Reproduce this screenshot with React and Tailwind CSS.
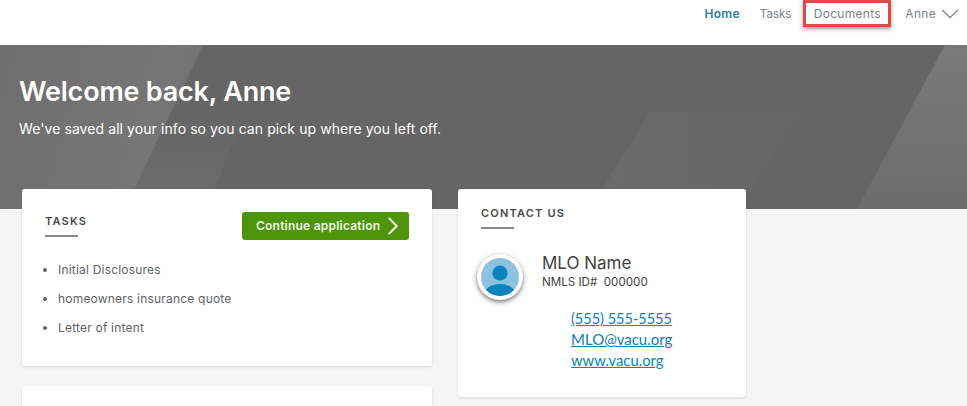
import React from 'react';
import { ChevronRight, ChevronDown } from 'lucide-react';

const tasks = ['Initial Disclosures', 'homeowners insurance quote', 'Letter of intent'];

function HeroShapes() {
  return (
    <svg className="absolute inset-0 h-full w-full" viewBox="0 0 967 164" preserveAspectRatio="none" aria-hidden="true">
      <defs>
        <linearGradient id="leftFade" x1="0" y1="0" x2="1" y2="0.2">
          <stop offset="0" stopColor="#6e6e6e" />
          <stop offset="0.85" stopColor="#767676" />
          <stop offset="1" stopColor="#727272" />
        </linearGradient>
        <linearGradient id="lowFade" x1="0" y1="0" x2="0" y2="1">
          <stop offset="0" stopColor="#666666" />
          <stop offset="1" stopColor="#6d6d6d" />
        </linearGradient>
        <linearGradient id="midFade" x1="0" y1="0" x2="1" y2="0">
          <stop offset="0" stopColor="#6b6b6b" />
          <stop offset="1" stopColor="#666666" />
        </linearGradient>
        <linearGradient id="rightFade" x1="0" y1="0" x2="0" y2="1">
          <stop offset="0" stopColor="#7a7a7a" />
          <stop offset="1" stopColor="#6c6c6c" />
        </linearGradient>
      </defs>
      <polygon points="0,0 203,0 125,164 0,164" fill="url(#leftFade)" />
      <polygon points="125,164 165,80 245,70 205,164" fill="url(#lowFade)" />
      <polygon points="650,67 800,67 740,164 590,164" fill="url(#midFade)" />
      <polygon points="945,0 967,0 967,164 857,164" fill="url(#rightFade)" />
    </svg>
  );
}

function SectionTitle({ children }) {
  return (
    <div>
      <h2 className="text-[11px] leading-[14px] font-semibold tracking-[1.2px] text-[#4a4a4a]">{children}</h2>
      <div className="mt-[7px] h-[2px] w-[33px] bg-[#8a8a8a]" />
    </div>
  );
}

function Avatar() {
  return (
    <div className="flex h-[46px] w-[46px] shrink-0 items-center justify-center rounded-full bg-white shadow-[0_2px_5px_rgba(0,0,0,0.55)]">
      <svg width="38" height="38" viewBox="0 0 38 38" aria-hidden="true">
        <defs>
          <clipPath id="avatarClip">
            <circle cx="19" cy="19" r="19" />
          </clipPath>
        </defs>
        <g clipPath="url(#avatarClip)">
          <rect width="38" height="38" fill="#8cc2e0" />
          <circle cx="19" cy="15" r="7.6" fill="#0a84ba" />
          <ellipse cx="19" cy="37" rx="16" ry="11" fill="#0a84ba" />
        </g>
      </svg>
    </div>
  );
}

export default function App() {
  return (
    <div className="h-[406px] w-[967px] overflow-hidden bg-[#f5f5f5] font-['Inter',sans-serif]">
      <nav className="flex h-[45px] items-start justify-end bg-white pr-[4px] text-[12px] leading-[18px] tracking-[0.3px]">
        <a className="mt-[5px] font-semibold text-[#2b7c9e]">Home</a>
        <a className="mt-[5px] ml-[20px] text-[11.5px] leading-[18px] tracking-[0px] text-[#7b8186]">Tasks</a>
        <a className="ml-[12px] flex h-[27px] w-[88px] items-center justify-center border-[3px] border-[#e2474b] text-[#7b8186] shadow-[0_2px_4px_rgba(0,0,0,0.4)]">
          Documents
        </a>
        <a className="mt-[5px] ml-[14px] flex items-center text-[#7b8186]">
          Anne
          <ChevronDown className="-my-[6px] -mr-[2px] -ml-[1px] h-[30px] w-[30px]" strokeWidth={0.9} />
        </a>
      </nav>

      <header className="relative h-[164px] bg-[#656565] pt-[28px] pl-[19px] text-white">
        <HeroShapes />
        <div className="relative">
          <h1 className="text-[27px] leading-[38px] font-semibold tracking-[-0.2px]">Welcome back, Anne</h1>
          <p className="mt-[8px] text-[14px] leading-[20px] tracking-[0.08px]">
            We've saved all your info so you can pick up where you left off.
          </p>
        </div>
      </header>

      <main className="relative -mt-[20px] flex items-start gap-[26px] pl-[22px]">
        <div className="flex w-[410px] flex-col gap-[20px]">
          <section className="h-[177px] rounded-[3px] bg-white px-[23px] pt-[23px] shadow-[0_1px_3px_rgba(0,0,0,0.12)]">
            <div className="flex items-start justify-between">
              <div className="pt-[2px]">
                <SectionTitle>TASKS</SectionTitle>
              </div>
              <button className="flex h-[28px] w-[167px] items-center justify-start rounded-[3px] bg-[#4f950b] pl-[14px] text-[12px] font-semibold tracking-[0.22px] whitespace-nowrap text-[#eef7e2]">
                Continue application
                <ChevronRight className="-my-[2px] -ml-[2px] h-[30px] w-[30px] shrink-0" strokeWidth={1.5} />
              </button>
            </div>
            <ul className="mt-[20px] flex list-disc flex-col gap-[10px] pl-[13px] text-[12px] leading-[19px] tracking-[0.2px] text-[#5f6265]">
              {tasks.map((task) => (
                <li key={task}>{task}</li>
              ))}
            </ul>
          </section>
          <section className="h-[60px] rounded-[3px] bg-white shadow-[0_1px_3px_rgba(0,0,0,0.12)]" />
        </div>

        <section className="h-[208px] w-[288px] rounded-[3px] bg-white pt-[17px] pl-[23px] shadow-[0_1px_3px_rgba(0,0,0,0.12)]">
          <SectionTitle>CONTACT US</SectionTitle>
          <div className="mt-[25px] -ml-[4px] flex items-start">
            <Avatar />
            <div className="-mt-[2px] ml-[19px] text-[#3f3f3f]">
              <div className="text-[17px] leading-[22px]">MLO Name</div>
              <div className="text-[11.6px] leading-[16px]">NMLS ID#&nbsp; 000000</div>
            </div>
          </div>
          <div className="mt-[8px] ml-[90px] flex flex-col font-['Lato',sans-serif] text-[14.5px] leading-[21px] text-[#0d7fb0] underline">
            <a>(555) 555-5555</a>
            <a className="text-[15px]">MLO@vacu.org</a>
            <a className="text-[14.8px]">www.vacu.org</a>
          </div>
        </section>
      </main>
    </div>
  );
}
